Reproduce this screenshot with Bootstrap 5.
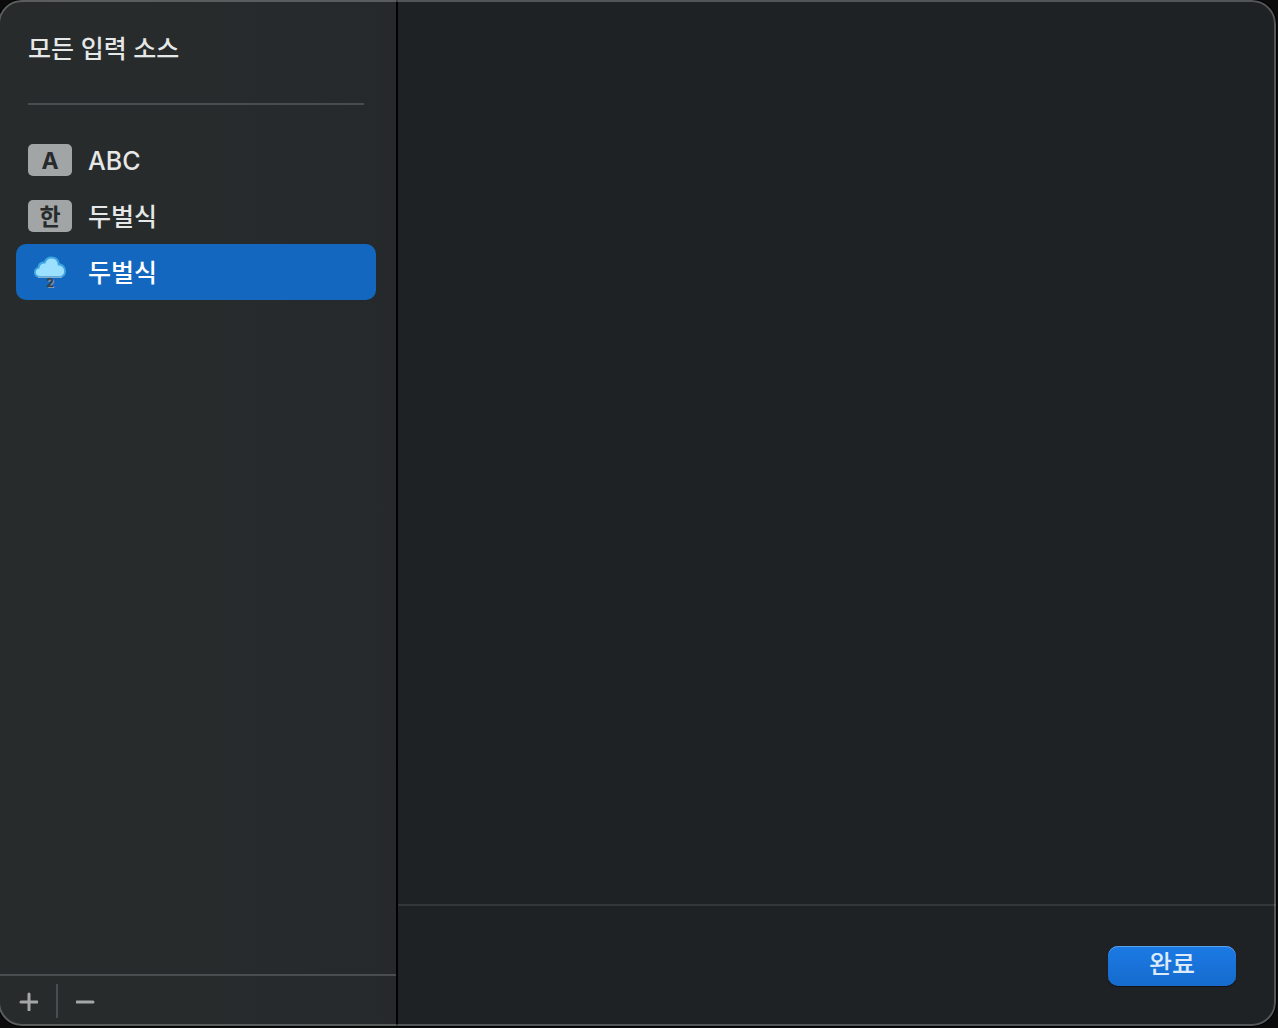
<!DOCTYPE html>
<html lang="ko" data-bs-theme="dark">
<head>
<meta charset="utf-8">
<meta name="viewport" content="width=device-width, initial-scale=1">
<title>입력 소스</title>
<link href="https://cdn.jsdelivr.net/npm/bootstrap@5.3.0/dist/css/bootstrap.min.css" rel="stylesheet">
<style>
body { background: #0b0b0c; color: #e6e7e7; font-family: Inter, "Noto Sans CJK KR", sans-serif; font-size: 25px; line-height: 32px; font-weight: 500; }
.stage { padding: 0 2px 2px 0; }
.dialog-window { margin-left: -2px; border-radius: 24px; background: #1e2224; box-shadow: 0 0 0 1px #000; }
/* translucent rim drawn above both panes */
.dialog-window::after { content: ""; position: absolute; inset: 0; border: 2px solid rgba(255, 255, 255, .24); border-radius: inherit; pointer-events: none; }
.source-pane { width: 400px; padding-left: 2px; border-right: 2px solid #000; background: linear-gradient(90deg, #282b2b, #272b2c 50%, #25292b); }
.pane-title { color: inherit; font-size: 25px; line-height: 32px; font-weight: 500; margin: 0 32px 0 28px; padding: 33px 0 38px; border-bottom: 2px solid #4a4d4f; }
.source-list { padding: 27px 20px 0 16px; }
.source-row { height: 56px; padding: 0 12px; gap: 16px; border: 0; border-radius: 10px; background: none; color: inherit; font-weight: 500; text-align: left; }
.source-name { padding-top: 2px; }
.source-row.active { background: #1467bf; color: #fff; }
.key-tile { width: 44px; height: 32px; border-radius: 5px; background: #a2a5a6; color: #282b2c; font-size: 23px; line-height: 34px; font-weight: 700; text-align: center; }
.cloud-icon { overflow: visible; }
.cloud-digit { font-size: 12px; font-weight: 700; text-anchor: middle; fill: #3d3f42; text-shadow: 1px 1px 0 #7f97ae; }
.pane-tools { height: 52px; border-top: 2px solid #4a4d4f; padding-bottom: 1px; }
.tool-btn { width: 56px; height: 49px; border: 0; background: none; color: #a4a7a8; }
.tool-rule { width: 2px; height: 34px; background: #4a4d4f; }
.action-bar { height: 122px; border-top: 2px solid #33373a; padding: 0 40px 0 0; }
.done-btn { width: 128px; height: 40px; padding: 0 0 4px; border: 0; border-radius: 10px; color: #dcebfc; font-size: 25px; line-height: 36px; font-weight: 500; background: linear-gradient(#1b7ae5, #166bcd); box-shadow: inset 0 1px 0 #5ba2ee, 0 1px 1px rgba(0, 0, 0, .5); }
.done-btn:hover { background: linear-gradient(#1b7ae5, #166bcd); color: #dcebfc; }
</style>
<script src="https://cdn.jsdelivr.net/npm/bootstrap@5.3.0/dist/js/bootstrap.bundle.min.js" defer></script>
</head>
<body>
<div class="stage vh-100 overflow-hidden">
  <main class="dialog-window position-relative d-flex h-100 overflow-hidden">
    <aside class="source-pane d-flex flex-column flex-shrink-0">
      <h1 class="pane-title">모든 입력 소스</h1>
      <div class="source-list flex-grow-1">
        <button type="button" class="source-row d-flex align-items-center w-100"><span class="key-tile">A</span><span class="source-name">ABC</span></button>
        <button type="button" class="source-row d-flex align-items-center w-100"><span class="key-tile">한</span><span class="source-name">두벌식</span></button>
        <button type="button" class="source-row active d-flex align-items-center w-100" aria-current="true">
          <svg class="cloud-icon" width="44" height="32" viewBox="0 0 44 32" aria-hidden="true">
            <path d="M11 21.500C7.500 21.500 6 18.800 6 16.200C6 13.500 7.700 11.600 9.800 11C10 7.500 12.500 5.300 16 5.400C17.200 2.200 20 .4 23.500 .4C28.300 .4 31.400 3.500 31.700 7.600C35.500 8 38 11.500 38 15.500C38 19.300 35.500 21.500 32 21.500Z" fill="#3ea6df"/>
            <path d="M10 21.200H34" stroke="#a8bfd0"/>
            <path d="M12 20C9 20 7.700 18.300 7.700 16C7.700 14 9.300 12.600 11.600 12.400C11.500 9 14 7.200 17.300 7.500C18.200 4.300 20.700 2.400 23.500 2.400C27.400 2.400 30 5.200 29.800 9.400C33.800 9.300 36.200 12 36.200 15.200C36.200 18.300 34.300 20 31.500 20Z" fill="#9be0ff"/>
            <text class="cloud-digit" x="22" y="31">2</text>
          </svg>
          <span class="source-name">두벌식</span>
        </button>
      </div>
      <div class="pane-tools d-flex align-items-center">
        <button type="button" class="tool-btn d-flex align-items-center justify-content-center p-0" aria-label="추가"><svg width="20" height="20" viewBox="0 0 20 20"><path d="M11 3v16M3 11h16" stroke="currentColor" stroke-width="3" stroke-linecap="round"/></svg></button>
        <span class="tool-rule"></span>
        <button type="button" class="tool-btn d-flex align-items-center justify-content-center p-0" aria-label="제거"><svg width="20" height="20" viewBox="0 0 20 20"><path d="M1 11h16" stroke="currentColor" stroke-width="3" stroke-linecap="round"/></svg></button>
      </div>
    </aside>
    <section class="d-flex flex-column flex-grow-1">
      <div class="flex-grow-1"></div>
      <footer class="action-bar d-flex align-items-center justify-content-end">
        <button type="button" class="done-btn btn">완료</button>
      </footer>
    </section>
  </main>
</div>
</body>
</html>
